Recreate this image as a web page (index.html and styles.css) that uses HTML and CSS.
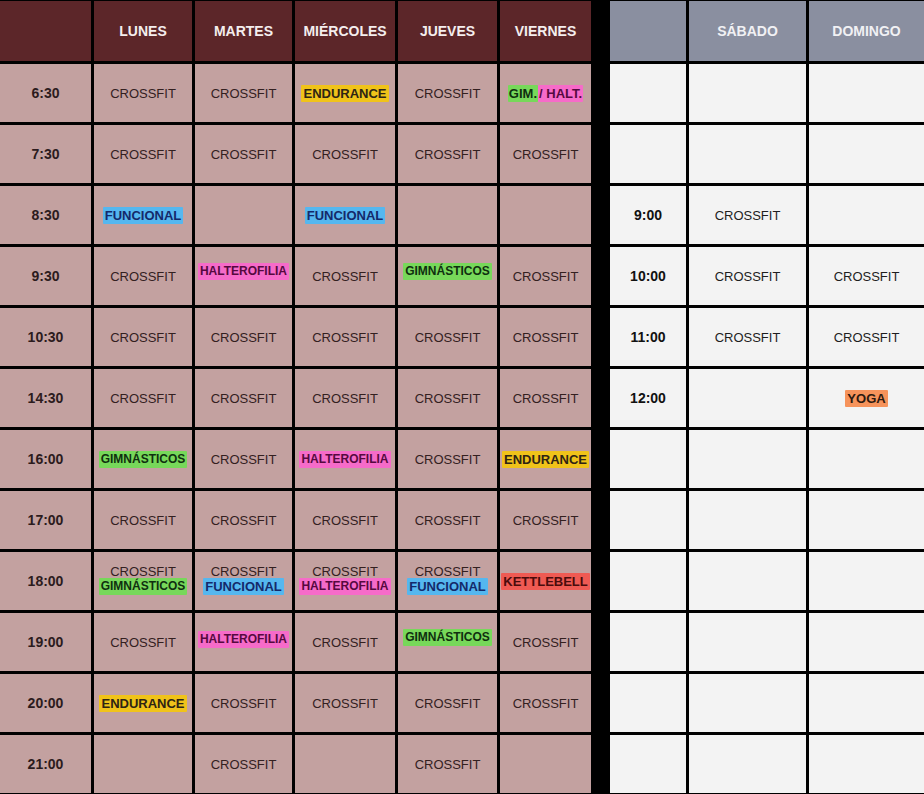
FILE: index.html
```html
<!DOCTYPE html>
<html lang="es">
<head>
<meta charset="utf-8">
<title>Horario</title>
<link rel="stylesheet" href="styles.css">
</head>
<body>
<div class="schedule">
  <div class="band"></div>

  <div class="cell head"></div>
  <div class="cell head">LUNES</div>
  <div class="cell head">MARTES</div>
  <div class="cell head">MIÉRCOLES</div>
  <div class="cell head">JUEVES</div>
  <div class="cell head">VIERNES</div>
  <div class="cell whead"></div>
  <div class="cell whead">SÁBADO</div>
  <div class="cell whead">DOMINGO</div>

  <div class="cell time">6:30</div>
  <div class="cell">CROSSFIT</div>
  <div class="cell">CROSSFIT</div>
  <div class="cell"><span class="badge yellow">ENDURANCE</span></div>
  <div class="cell">CROSSFIT</div>
  <div class="cell"><span class="combo"><span class="badge green tight">GIM. </span><span class="badge pink tight">/ HALT.</span></span></div>
  <div class="cell wk"></div>
  <div class="cell wk"></div>
  <div class="cell wk"></div>

  <div class="cell time">7:30</div>
  <div class="cell">CROSSFIT</div>
  <div class="cell">CROSSFIT</div>
  <div class="cell">CROSSFIT</div>
  <div class="cell">CROSSFIT</div>
  <div class="cell">CROSSFIT</div>
  <div class="cell wk"></div>
  <div class="cell wk"></div>
  <div class="cell wk"></div>

  <div class="cell time">8:30</div>
  <div class="cell"><span class="badge blue">FUNCIONAL</span></div>
  <div class="cell"></div>
  <div class="cell"><span class="badge blue">FUNCIONAL</span></div>
  <div class="cell"></div>
  <div class="cell"></div>
  <div class="cell wk wtime">9:00</div>
  <div class="cell wk">CROSSFIT</div>
  <div class="cell wk"></div>

  <div class="cell time">9:30</div>
  <div class="cell">CROSSFIT</div>
  <div class="cell"><span class="badge pink sm lift">HALTEROFILIA</span></div>
  <div class="cell">CROSSFIT</div>
  <div class="cell"><span class="badge green sm lift">GIMNÁSTICOS</span></div>
  <div class="cell">CROSSFIT</div>
  <div class="cell wk wtime">10:00</div>
  <div class="cell wk">CROSSFIT</div>
  <div class="cell wk">CROSSFIT</div>

  <div class="cell time">10:30</div>
  <div class="cell">CROSSFIT</div>
  <div class="cell">CROSSFIT</div>
  <div class="cell">CROSSFIT</div>
  <div class="cell">CROSSFIT</div>
  <div class="cell">CROSSFIT</div>
  <div class="cell wk wtime">11:00</div>
  <div class="cell wk">CROSSFIT</div>
  <div class="cell wk">CROSSFIT</div>

  <div class="cell time">14:30</div>
  <div class="cell">CROSSFIT</div>
  <div class="cell">CROSSFIT</div>
  <div class="cell">CROSSFIT</div>
  <div class="cell">CROSSFIT</div>
  <div class="cell">CROSSFIT</div>
  <div class="cell wk wtime">12:00</div>
  <div class="cell wk"></div>
  <div class="cell wk"><span class="badge orange">YOGA</span></div>

  <div class="cell time">16:00</div>
  <div class="cell"><span class="badge green sm">GIMNÁSTICOS</span></div>
  <div class="cell">CROSSFIT</div>
  <div class="cell"><span class="badge pink sm">HALTEROFILIA</span></div>
  <div class="cell">CROSSFIT</div>
  <div class="cell"><span class="badge yellow">ENDURANCE</span></div>
  <div class="cell wk"></div>
  <div class="cell wk"></div>
  <div class="cell wk"></div>

  <div class="cell time">17:00</div>
  <div class="cell">CROSSFIT</div>
  <div class="cell">CROSSFIT</div>
  <div class="cell">CROSSFIT</div>
  <div class="cell">CROSSFIT</div>
  <div class="cell">CROSSFIT</div>
  <div class="cell wk"></div>
  <div class="cell wk"></div>
  <div class="cell wk"></div>

  <div class="cell time">18:00</div>
  <div class="cell stack"><span class="line">CROSSFIT</span><span class="badge green sm">GIMNÁSTICOS</span></div>
  <div class="cell stack"><span class="line">CROSSFIT</span><span class="badge blue">FUNCIONAL</span></div>
  <div class="cell stack"><span class="line">CROSSFIT</span><span class="badge pink sm">HALTEROFILIA</span></div>
  <div class="cell stack"><span class="line">CROSSFIT</span><span class="badge blue">FUNCIONAL</span></div>
  <div class="cell"><span class="badge red">KETTLEBELL</span></div>
  <div class="cell wk"></div>
  <div class="cell wk"></div>
  <div class="cell wk"></div>

  <div class="cell time">19:00</div>
  <div class="cell">CROSSFIT</div>
  <div class="cell"><span class="badge pink sm lift-s">HALTEROFILIA</span></div>
  <div class="cell">CROSSFIT</div>
  <div class="cell"><span class="badge green sm lift">GIMNÁSTICOS</span></div>
  <div class="cell">CROSSFIT</div>
  <div class="cell wk"></div>
  <div class="cell wk"></div>
  <div class="cell wk"></div>

  <div class="cell time">20:00</div>
  <div class="cell"><span class="badge yellow">ENDURANCE</span></div>
  <div class="cell">CROSSFIT</div>
  <div class="cell">CROSSFIT</div>
  <div class="cell">CROSSFIT</div>
  <div class="cell">CROSSFIT</div>
  <div class="cell wk"></div>
  <div class="cell wk"></div>
  <div class="cell wk"></div>

  <div class="cell time">21:00</div>
  <div class="cell"></div>
  <div class="cell">CROSSFIT</div>
  <div class="cell"></div>
  <div class="cell">CROSSFIT</div>
  <div class="cell"></div>
  <div class="cell wk"></div>
  <div class="cell wk"></div>
  <div class="cell wk"></div>
</div>
</body>
</html>
```

FILE: styles.css
```css
html, body {
  margin: 0;
  padding: 0;
  background: #000;
}

body {
  font-family: "Liberation Sans", Arial, sans-serif;
  width: 924px;
  height: 794px;
  overflow: hidden;
}

.schedule {
  display: grid;
  grid-template-columns: 91px 98px 97px 100px 99px 91px 13px 76px 117px 115px;
  grid-template-rows: 60px repeat(12, 58px);
  gap: 3px;
  padding-top: 1px;
  background: #000;
}

.band {
  grid-column: 7;
  grid-row: 1 / span 13;
  background: #000;
}

.cell {
  background: #c3a1a0;
  color: #33201f;
  font-size: 13px;
  display: flex;
  align-items: center;
  justify-content: center;
  text-align: center;
  white-space: nowrap;
}

.head {
  background: #5c2629;
  color: #f4eeee;
  font-weight: bold;
  font-size: 14px;
}

.whead {
  background: #8a8fa0;
  color: #f1f1f4;
  font-weight: bold;
  font-size: 14px;
}

.time {
  font-weight: bold;
  font-size: 14px;
  color: #2c1b1d;
}

.wk {
  background: #f3f3f3;
  color: #1e1e1e;
}

.wtime {
  font-weight: bold;
  font-size: 14px;
  color: #111;
}

.badge {
  font-weight: bold;
  font-size: 13px;
  line-height: 17px;
  padding: 0 2px;
  border-radius: 1px;
}

.badge.sm {
  font-size: 12px;
}

.badge.tight {
  padding: 0 1px;
}

.combo {
  display: flex;
}

.lift {
  margin-bottom: 9px;
}

.lift-s {
  margin-bottom: 5px;
}

.yellow { background: #f0c31a; color: #2e2414; }
.green  { background: #77d85a; color: #0f2f0f; }
.pink   { background: #f66bc9; color: #55093f; }
.blue   { background: #55b7ef; color: #14296a; }
.red    { background: #ef5a53; color: #4b0c0c; }
.orange { background: #f6935b; color: #2c1a10; }

.stack {
  flex-direction: column;
  padding-bottom: 2px;
}

.stack .line {
  line-height: 12px;
  height: 12px;
}
```
